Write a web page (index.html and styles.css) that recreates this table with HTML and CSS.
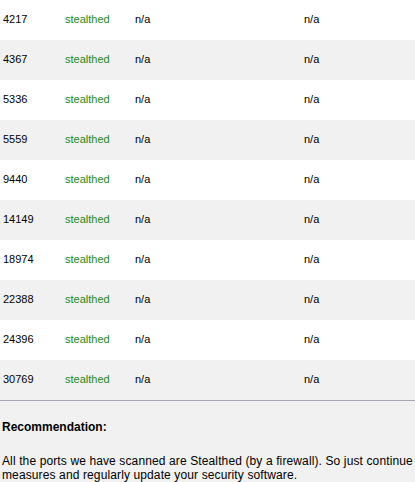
FILE: index.html
```html
<!DOCTYPE html>
<html>
<head>
<meta charset="utf-8">
<link rel="stylesheet" href="styles.css">
</head>
<body>
<div class="ports">
  <div class="row odd"><span>4217</span><span class="ok">stealthed</span><span>n/a</span><span>n/a</span></div>
  <div class="row even"><span>4367</span><span class="ok">stealthed</span><span>n/a</span><span>n/a</span></div>
  <div class="row odd"><span>5336</span><span class="ok">stealthed</span><span>n/a</span><span>n/a</span></div>
  <div class="row even"><span>5559</span><span class="ok">stealthed</span><span>n/a</span><span>n/a</span></div>
  <div class="row odd"><span>9440</span><span class="ok">stealthed</span><span>n/a</span><span>n/a</span></div>
  <div class="row even"><span>14149</span><span class="ok">stealthed</span><span>n/a</span><span>n/a</span></div>
  <div class="row odd"><span>18974</span><span class="ok">stealthed</span><span>n/a</span><span>n/a</span></div>
  <div class="row even"><span>22388</span><span class="ok">stealthed</span><span>n/a</span><span>n/a</span></div>
  <div class="row odd"><span>24396</span><span class="ok">stealthed</span><span>n/a</span><span>n/a</span></div>
  <div class="row even"><span>30769</span><span class="ok">stealthed</span><span>n/a</span><span>n/a</span></div>
</div>
<h3 class="rec-title">Recommendation:</h3>
<p class="rec-text">All the ports we have scanned are Stealthed (by a firewall). So just continue measures and regularly update your security software.</p>
</body>
</html>
```
FILE: styles.css
```css
html, body {
  margin: 0;
  padding: 0;
  background: #f1f1f1;
  font-family: "Liberation Sans", Arial, sans-serif;
  color: #000;
}
.ports {
  border-bottom: 1px solid #a4a4b4;
}
.row {
  box-sizing: border-box;
  display: grid;
  grid-template-columns: 62px 70px 169px 1fr;
  align-items: center;
  height: 40px;
  padding: 0 0 2px 3px;
  font-size: 11px;
  line-height: 13px;
}
.row.odd { background: #ffffff; }
.row.even { background: #f1f1f1; }
.ok { color: #1a8a1a; }
.rec-title {
  margin: 19px 0 0 2px;
  font-size: 12px;
  line-height: 14px;
  font-weight: bold;
}
.rec-text {
  margin: 20px 0 0 2px;
  font-size: 12px;
  line-height: 14px;
  letter-spacing: 0.12px;
  width: 420px;
}
```
